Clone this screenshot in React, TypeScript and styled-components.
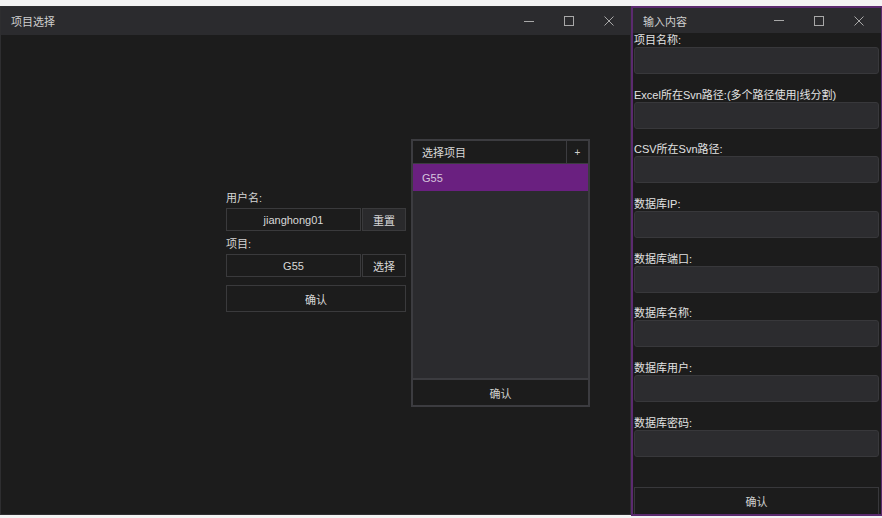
import React from "react";
import styled, { createGlobalStyle } from "styled-components";

const GlobalStyle = createGlobalStyle`
  html, body { margin: 0; padding: 0; }
  body {
    background: #f3f3f3;
    font-family: "Liberation Sans", "Noto Sans CJK SC", sans-serif;
    font-size: 11px;
    overflow: hidden;
  }
  * { box-sizing: border-box; }
`;

const Desktop = styled.div`
  width: 882px;
  height: 518px;
  display: flex;
  align-items: flex-start;
  padding-top: 6px;
  background: #f3f3f3;
`;

const MainWindow = styled.div`
  width: 631px;
  height: 509px;
  background: #1c1c1c;
  border: 1px solid #2e2e30;
  display: flex;
  flex-direction: column;
  flex-shrink: 0;
`;

const SideWindow = styled.div`
  width: 251px;
  height: 510px;
  background: #1c1c1c;
  border: 2px solid #5b2a6f;
  border-right-width: 1px;
  display: flex;
  flex-direction: column;
  flex-shrink: 0;
`;

const TitleBar = styled.div<{ $h: number }>`
  height: ${(p) => p.$h}px;
  background: #2b2b2e;
  display: flex;
  align-items: center;
  padding-left: 10px;
  flex-shrink: 0;
`;

const TitleText = styled.span`
  color: #cfcfcf;
  font-size: 11px;
  flex: 1;
`;

const Controls = styled.div<{ $pr: number }>`
  display: flex;
  height: 100%;
  padding-right: ${(p) => p.$pr}px;
`;

const CtrlBtn = styled.div`
  width: 40px;
  height: 100%;
  display: flex;
  align-items: center;
  justify-content: center;
`;

const MinLine = styled.div`
  width: 10px;
  height: 1px;
  background: #a8a8a8;
`;

const MaxBox = styled.div`
  width: 10px;
  height: 10px;
  border: 1px solid #a8a8a8;
`;

const WindowControls = ({ pr }: { pr: number }) => (
  <Controls $pr={pr}>
    <CtrlBtn>
      <MinLine />
    </CtrlBtn>
    <CtrlBtn>
      <MaxBox />
    </CtrlBtn>
    <CtrlBtn>
      <svg width="10" height="10" viewBox="0 0 10 10">
        <path d="M0.5 0.5 L9.5 9.5 M9.5 0.5 L0.5 9.5" stroke="#a8a8a8" strokeWidth="1" />
      </svg>
    </CtrlBtn>
  </Controls>
);

const MainBody = styled.div`
  flex: 1;
  display: flex;
  align-items: flex-start;
  padding-left: 225px;
  gap: 5px;
`;

const Form = styled.div`
  width: 180px;
  margin-top: 150px;
  display: flex;
  flex-direction: column;
`;

const FormLabel = styled.div`
  height: 23px;
  display: flex;
  align-items: center;
  color: #d4d4d4;
`;

const FieldRow = styled.div`
  display: flex;
  gap: 1px;
  height: 23px;
`;

const TextBox = styled.div`
  flex: 1;
  border: 1px solid #3a3a3c;
  background: #1c1c1c;
  color: #d8d8d8;
  display: flex;
  align-items: center;
  justify-content: center;
`;

const SmallButton = styled.div<{ $hover?: boolean }>`
  width: 44px;
  border: 1px solid #3a3a3c;
  background: ${(p) => (p.$hover ? "#2a2a2c" : "#1c1c1c")};
  color: #d8d8d8;
  display: flex;
  align-items: center;
  justify-content: center;
`;

const Spacer = styled.div<{ $h: number }>`
  height: ${(p) => p.$h}px;
`;

const WideButton = styled.div<{ $h: number }>`
  height: ${(p) => p.$h}px;
  border: 1px solid #3a3a3c;
  background: #1c1c1c;
  color: #d8d8d8;
  display: flex;
  align-items: center;
  justify-content: center;
`;

const Panel = styled.div`
  width: 179px;
  height: 268px;
  margin-top: 104px;
  border: 2px solid #3c3c40;
  display: flex;
  flex-direction: column;
  background: #1c1c1c;
`;

const PanelHeader = styled.div`
  height: 23px;
  display: flex;
  border-bottom: 1px solid #3c3c40;
  flex-shrink: 0;
`;

const PanelTitle = styled.div`
  flex: 1;
  display: flex;
  align-items: center;
  padding-left: 9px;
  color: #d8d8d8;
`;

const PlusButton = styled.div`
  width: 22px;
  border-left: 1px solid #3c3c40;
  display: flex;
  align-items: center;
  justify-content: center;
  color: #d0d0d0;
  font-size: 10px;
`;

const ListArea = styled.div`
  flex: 1;
  background: #2b2b2e;
  display: flex;
  flex-direction: column;
`;

const ListItem = styled.div<{ $selected?: boolean }>`
  height: 27px;
  display: flex;
  align-items: center;
  padding-left: 9px;
  background: ${(p) => (p.$selected ? "#6a2080" : "transparent")};
  color: #d6c4de;
`;

const PanelFooter = styled.div`
  height: 27px;
  border-top: 2px solid #3c3c40;
  display: flex;
  align-items: center;
  justify-content: center;
  color: #d0d0d0;
  flex-shrink: 0;
`;

const SideBody = styled.div`
  flex: 1;
  display: flex;
  flex-direction: column;
  padding: 0 2px 0 1px;
`;

const FieldGroup = styled.div`
  display: flex;
  flex-direction: column;
  margin-bottom: 13.7px;
`;

const SideLabel = styled.div`
  height: 14px;
  line-height: 14px;
  color: #e2e2e2;
  white-space: nowrap;
`;

const SideInput = styled.div`
  height: 27px;
  background: #2c2c2f;
  border: 1px solid #38383b;
  border-radius: 3px;
`;

const SideConfirm = styled.div`
  margin-top: auto;
  height: 27px;
  border: 1px solid #38383b;
  border-bottom: none;
  display: flex;
  align-items: center;
  justify-content: center;
  color: #d0d0d0;
`;

const fields = [
  "项目名称:",
  "Excel所在Svn路径:(多个路径使用|线分割)",
  "CSV所在Svn路径:",
  "数据库IP:",
  "数据库端口:",
  "数据库名称:",
  "数据库用户:",
  "数据库密码:",
];

export default function App() {
  return (
    <>
      <GlobalStyle />
      <Desktop>
        <MainWindow>
          <TitleBar $h={28}>
            <TitleText>项目选择</TitleText>
            <WindowControls pr={1} />
          </TitleBar>
          <MainBody>
            <Form>
              <FormLabel>用户名:</FormLabel>
              <FieldRow>
                <TextBox>jianghong01</TextBox>
                <SmallButton $hover>重置</SmallButton>
              </FieldRow>
              <FormLabel>项目:</FormLabel>
              <FieldRow>
                <TextBox>G55</TextBox>
                <SmallButton>选择</SmallButton>
              </FieldRow>
              <Spacer $h={8} />
              <WideButton $h={27}>确认</WideButton>
            </Form>
            <Panel>
              <PanelHeader>
                <PanelTitle>选择项目</PanelTitle>
                <PlusButton>+</PlusButton>
              </PanelHeader>
              <ListArea>
                <ListItem $selected>G55</ListItem>
              </ListArea>
              <PanelFooter>确认</PanelFooter>
            </Panel>
          </MainBody>
        </MainWindow>
        <SideWindow>
          <TitleBar $h={25}>
            <TitleText>输入内容</TitleText>
            <WindowControls pr={2} />
          </TitleBar>
          <SideBody>
            {fields.map((f) => (
              <FieldGroup key={f}>
                <SideLabel>{f}</SideLabel>
                <SideInput />
              </FieldGroup>
            ))}
            <SideConfirm>确认</SideConfirm>
          </SideBody>
        </SideWindow>
      </Desktop>
    </>
  );
}
